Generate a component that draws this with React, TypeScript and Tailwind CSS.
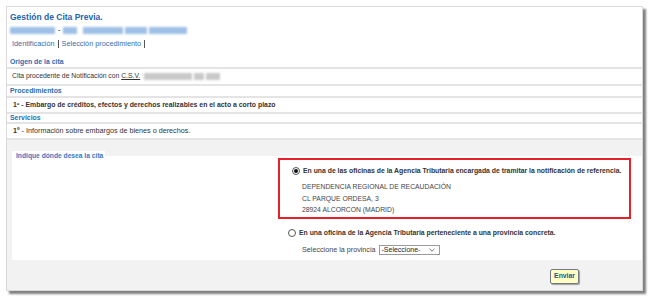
import React from 'react';

const Blur = ({ w, color = 'bg-[#9fc0e6]' }: { w: number; color?: string }) => (
  <span className={`inline-block h-[7px] ${color} blur-[1px]`} style={{ width: w }} />
);

const Radio = ({ checked }: { checked?: boolean }) => (
  <span className="w-[8px] h-[8px] rounded-full border border-[#555] bg-white flex items-center justify-center shrink-0">
    {checked && <span className="w-[4px] h-[4px] rounded-full bg-[#111]" />}
  </span>
);

export default function App() {
  return (
    <div className="w-[650px] h-[299px] bg-white pt-[6px] pl-[6px] font-['Liberation_Sans',Arial,sans-serif]">
      <div className="w-[637px] h-[285px] border border-[#d9d9d9] shadow-[3px_3px_2px_rgba(0,0,0,0.5)] flex flex-col bg-white">
        {/* header */}
        <div className="h-[15px] pl-[3px] flex items-end">
          <span className="text-[8.5px] leading-[10px] font-bold text-[#1f62b0]">Gestión de Cita Previa.</span>
        </div>
        <div className="h-[16px] pl-[3px] flex items-center gap-[2px]">
          <Blur w={45} />
          <span className="text-[7px] font-bold text-[#1f62b0] px-[1px]">-</span>
          <Blur w={14} />
          <span className="w-[2px]" />
          <Blur w={40} />
          <Blur w={22} />
          <Blur w={38} />
        </div>
        <div className="h-[12px] pl-[5px] flex items-center text-[7.3px] text-[#3b6ea8]">
          <span>Identificación</span>
          <span className="mx-[3px] w-[1px] h-[8px] bg-[#555]" />
          <span>Selección procedimiento</span>
          <span className="mx-[3px] w-[1px] h-[8px] bg-[#555]" />
        </div>

        {/* origen */}
        <div className="h-[17px] pl-[3px] flex items-end pb-[1px]">
          <span className="text-[6.9px] leading-[8px] font-bold text-[#2a6db6]">Origen de la cita</span>
        </div>
        <div className="h-[19px] border-y-2 border-[#e4e4e4] pl-[5px] flex items-center text-[6.8px] text-[#333]">
          <span>Cita procedente de Notificación con <span className="underline">C.S.V.</span></span>
          <span className="ml-[4px] flex gap-[2px]">
            <Blur w={48} color="bg-[#c9c9c9]" />
            <Blur w={10} color="bg-[#c9c9c9]" />
            <Blur w={14} color="bg-[#c9c9c9]" />
          </span>
        </div>

        {/* procedimientos */}
        <div className="h-[10px] pl-[3px] flex items-center">
          <span className="text-[6.9px] leading-[8px] font-bold text-[#2a6db6]">Procedimientos</span>
        </div>
        <div className="h-[18px] border-y-2 border-[#e4e4e4] pl-[6px] flex items-center text-[6.9px] font-bold text-[#333]">
          1º - Embargo de créditos, efectos y derechos realizables en el acto a corto plazo
        </div>

        {/* servicios */}
        <div className="h-[8px] pl-[3px] flex items-center">
          <span className="text-[6.9px] leading-[8px] font-bold text-[#2a6db6]">Servicios</span>
        </div>
        <div className="h-[18px] border-y-2 border-[#e4e4e4] pl-[6px] flex items-center text-[7.2px] text-[#333]">
          <span><span className="font-bold">1º</span> - Información sobre embargos de bienes o derechos.</span>
        </div>

        {/* donde */}
        <div className="flex-1 bg-[#f2f2f2] flex flex-col pl-[5px] pt-[11px]">
          <div className="w-[93px] h-[5px] bg-white" />
          <div className="h-[104px] bg-white relative">
            <span className="absolute left-[4px] top-[-4px] text-[6.7px] leading-[8px] font-bold text-[#3b78c0]">
              Indique dónde desea la cita
            </span>
            <div className="flex pt-[2px]">
              <div className="w-[266px] shrink-0" />
              <div className="flex flex-col">
                <div className="w-[353px] h-[61px] border-2 border-[#e8202a] flex flex-col pl-[12px] pt-[7px]">
                  <div className="flex items-center gap-[3px] h-[8px]">
                    <Radio checked />
                    <span className="text-[6.85px] font-bold text-[#333] whitespace-nowrap">
                      En una de las oficinas de la Agencia Tributaria encargada de tramitar la notificación de referencia.
                    </span>
                  </div>
                  <div className="pl-[10px] pt-[6px] text-[6.8px] leading-[11.5px] text-[#444]">
                    <div>DEPENDENCIA REGIONAL DE RECAUDACIÓN</div>
                    <div>CL PARQUE ORDESA, 3</div>
                    <div>28924 ALCORCON (MADRID)</div>
                  </div>
                </div>
                <div className="flex items-center gap-[3px] h-[8px] mt-[10px] pl-[10px]">
                  <Radio />
                  <span className="text-[6.85px] font-bold text-[#333] whitespace-nowrap">
                    En una oficina de la Agencia Tributaria perteneciente a una provincia concreta.
                  </span>
                </div>
                <div className="flex items-center mt-[8px] pl-[24px] text-[7.2px] text-[#444]">
                  <span>Seleccione la provincia</span>
                  <span className="ml-[3px] w-[61px] h-[10px] border border-[#9a9a9a] bg-white flex items-center justify-between px-[2px]">
                    <span className="text-[7px] text-[#222]">-Seleccione-</span>
                    <svg width="6" height="4" viewBox="0 0 6 4" className="mr-[2px]">
                      <path d="M0.5 0.8 L3 3.2 L5.5 0.8" fill="none" stroke="#555" strokeWidth="0.8" />
                    </svg>
                  </span>
                </div>
              </div>
            </div>
          </div>
          <div className="flex-1 flex items-start justify-end pr-[63px] pt-[9px]">
            <button className="w-[29px] h-[15px] bg-[#ffffc4] border border-[#6f7a86] rounded-[2px] shadow-[1px_1px_1px_rgba(0,0,0,0.35)] text-[6.8px] font-bold text-[#1f4f90]">
              Enviar
            </button>
          </div>
        </div>
      </div>
    </div>
  );
}
